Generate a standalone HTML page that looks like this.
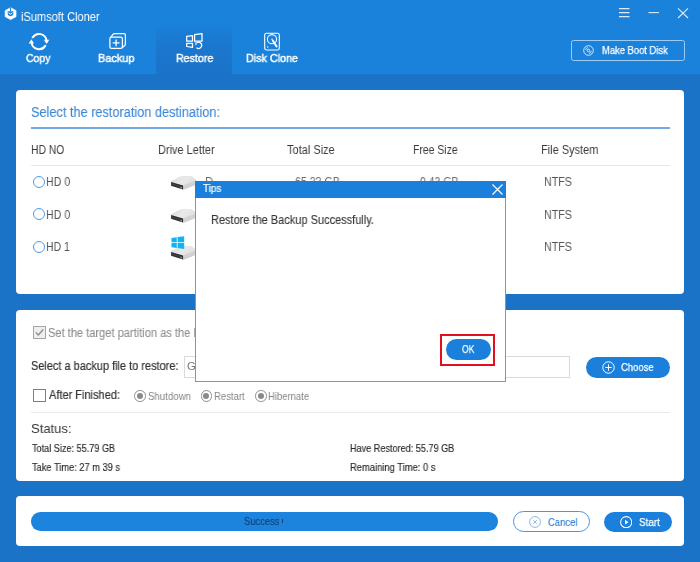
<!DOCTYPE html>
<html><head><meta charset="utf-8">
<style>
*{box-sizing:border-box;margin:0;padding:0}
html,body{width:700px;height:562px;overflow:hidden}
body{background:#1a73c6;font-family:"Liberation Sans",sans-serif;position:relative;color:#333}
.abs{position:absolute}
#hdr{left:0;top:0;width:700px;height:74px;background:#1a82db}
#seltab{left:156px;top:24px;width:76px;height:50px;background:linear-gradient(to bottom,rgba(27,116,202,0) 0,rgba(27,116,202,.55) 25%,rgba(27,116,202,.9) 60%,#1b74ca 100%)}
.t{position:absolute;white-space:nowrap;line-height:1;transform-origin:0 0;will-change:transform}
.panel{position:absolute;left:15.5px;width:668.5px;background:#fff;border-radius:4px}
.radio{position:absolute;width:12px;height:12px;border:1.1px solid #4d9ce6;border-radius:50%;background:#fff}
.gr{position:absolute;width:11.5px;height:11.5px;border:1.2px solid #8f8f8f;border-radius:50%;background:#fff}
.gr:after{content:"";position:absolute;left:1.6px;top:1.6px;width:6px;height:6px;border-radius:50%;background:#8a8a8a}
</style></head><body>
<div id="hdr" class="abs"></div>
<div id="seltab" class="abs"></div>

<!-- logo -->
<svg class="abs" style="left:4px;top:7px" width="13" height="13.500" viewBox="0 0 13 13.500"><path d="M6.600 0.700 L12 3.600 V9.700 L6.600 12.600 L1.200 9.700 V3.600 Z" fill="#fff" stroke="#fff" stroke-width="0.700" stroke-linejoin="round"/><path d="M6.500 0.500 V4.300" stroke="#1a82db" stroke-width="1"/><path d="M3.700 4.200 H9.300 V7 Q9.300 8 8.300 8.500 L6.500 9.300 L4.700 8.500 Q3.700 8 3.700 7 Z" fill="#1a82db"/><path d="M4.600 5.800 L6.500 7.100 L8.400 5.800" stroke="#fff" stroke-width="1" fill="none"/></svg>

<!-- tab icons -->
<svg class="abs" style="left:28px;top:32px" width="22" height="20" viewBox="0 0 22 20" fill="none" stroke="#fff" stroke-width="1.900" stroke-linecap="round">
<path d="M4.70 5.35 A7.6 7.6 0 0 1 18.53 8.54"/><path d="M17.30 13.85 A7.6 7.6 0 0 1 3.47 10.66"/>
<path d="M15.90 7.80 H21.30 L18.60 11.90 Z" fill="#fff" stroke="none"/><path d="M0.70 11.40 H6.10 L3.40 7.30 Z" fill="#fff" stroke="none"/>
</svg>
<svg class="abs" style="left:107.500px;top:32px" width="20" height="18" viewBox="0 0 20 18" fill="none" stroke="#fff" stroke-width="1.250" stroke-linejoin="round">
<rect x="1.900" y="5.100" width="12.500" height="11.300" rx="1.600"/><path d="M2.600 5.400 L5 2.300 Q5.600 1.600 6.500 1.600 H15.900 Q17.400 1.600 17.400 3.100 V12.100 Q17.400 13 16.800 13.500 L14 15.900"/>
<path d="M8.100 7.400 V14.200 M4.700 10.800 H11.500" stroke-width="1.300"/>
</svg>
<svg class="abs" style="left:185px;top:33px" width="19" height="17" viewBox="0 0 19 17" fill="none" stroke="#fff" stroke-width="1.250" stroke-linejoin="round">
<path d="M1.700 3.300 L7.500 2.600 V8.200 H1.700 Z"/><path d="M9.600 1.600 L17 0.700 V8.200 H9.600 Z"/><path d="M1.700 10.300 H7.500 V14.400 L1.700 13.500 Z"/>
<path d="M11.500 10 A3.100 3.100 0 1 1 11.400 14.600" stroke-width="1.200"/><path d="M9.800 9.700 L11.300 10.600 L10.700 12.200" stroke-width="1"/>
</svg>
<svg class="abs" style="left:263px;top:31.500px" width="18" height="19" viewBox="0 0 18 19" fill="none" stroke="#fff" stroke-width="1.100">
<rect x="1.700" y="1.200" width="14.600" height="16.800" rx="1.800"/><circle cx="9" cy="7.200" r="4.600"/><circle cx="9" cy="7.200" r="0.700" fill="#fff" stroke="none"/><path d="M9.800 8.500 L13.600 14.600" stroke-width="1.900" stroke-linecap="round"/><circle cx="4.700" cy="15" r="0.700" fill="#fff" stroke="none"/>
</svg>

<!-- window controls -->
<svg class="abs" style="left:618px;top:6px" width="72" height="14" viewBox="0 0 72 14" stroke="#dcebfa" stroke-width="1.100" fill="none">
<path d="M1 2.600 H11.500 M1 6.600 H11.500 M1 10.600 H11.500"/><path d="M30.500 6.600 H41"/><path d="M60 2.400 L70 12 M70 2.400 L60 12"/>
</svg>
<!-- Make boot disk -->
<div class="abs" style="left:571px;top:40px;width:114px;height:21px;border:1px solid #9ccbf4;border-radius:2.500px"></div>
<svg class="abs" style="left:583px;top:45.300px" width="11" height="11" viewBox="0 0 11 11" fill="none" stroke="#e9f3fd" stroke-width="0.900"><circle cx="5.500" cy="5.500" r="4.800"/><circle cx="5.500" cy="5.500" r="1.300"/><path d="M2.600 4.800 A3 3 0 0 1 4.800 2.600"/><path d="M8.400 6.200 A3 3 0 0 1 6.200 8.400"/></svg>

<!-- panel 1 -->
<div class="panel" style="top:89.500px;height:204.500px"></div>
<div class="abs" style="left:31px;top:127.300px;width:638.500px;height:1.400px;background:#74aae4"></div>
<div class="abs" style="left:31px;top:165px;width:638.500px;height:1px;background:#e7e7e7"></div>

<div class="radio" style="left:33px;top:175.800px"></div>
<div class="radio" style="left:33px;top:208.100px"></div>
<div class="radio" style="left:33px;top:240.800px"></div>

<!-- drive icons -->
<svg class="abs" style="left:170px;top:175px" width="30" height="16" viewBox="0 0 30 16"><use href="#drv"/></svg>
<svg class="abs" style="left:170px;top:207.500px" width="30" height="16" viewBox="0 0 30 16"><use href="#drv"/></svg>
<svg class="abs" style="left:170px;top:245px" width="30" height="16" viewBox="0 0 30 16"><use href="#drv"/></svg>
<svg class="abs" style="left:170.500px;top:235.500px" width="14" height="13" viewBox="0 0 14 13"><path d="M0.500 2 L5.800 1.200 V6.200 H0.500 Z M6.600 1.100 L13.200 0.200 V6.200 H6.600 Z M0.500 7 H5.800 V12 L0.500 11.200 Z M6.600 7 H13.200 V13 L6.600 12.100 Z" fill="#12b4f0"/></svg>
<svg width="0" height="0" style="position:absolute"><defs>
<linearGradient id="dg" x1="0" y1="0" x2="1" y2="0.6"><stop offset="0" stop-color="#d9d9d9"/><stop offset="0.5" stop-color="#e9e9e9"/><stop offset="1" stop-color="#dcdcdc"/></linearGradient>
<g id="drv"><path d="M0.800 6.300 L10.300 1.500 Q11.500 0.900 12.800 0.900 L20.800 1.100 Q22 1.150 22.800 1.900 L26.600 5.300 V9.600 L14.300 14.600 Q13.500 14.900 12.700 14.600 L0.800 10.900 Z" fill="url(#dg)"/><path d="M13.600 10.300 L26.600 5.300 V9.600 L14.300 14.600 Q13.900 14.750 13.600 14.750 Z" fill="#d2d2d2"/><path d="M1.100 6.900 L13.100 10.500 V14.500 L1.100 10.700 Z" fill="#2e2e2e"/><path d="M2.200 8.600 L12 11.600 V12.800 L2.200 9.800 Z" fill="#484848"/><path d="M10.600 12 L11.900 12.400 V13.500 L10.600 13.100 Z" fill="#b6e6b0"/></g>
</defs></svg>

<!-- panel 2 -->
<div class="panel" style="top:310px;height:170.500px"></div>
<div class="abs" style="left:33px;top:326.300px;width:13.300px;height:13px;border:1.200px solid #a6a6a6;background:#efefef"></div>
<svg class="abs" style="left:34px;top:327.300px" width="11" height="11" viewBox="0 0 11 11" fill="none" stroke="#8a8a8a" stroke-width="1.300"><path d="M1.800 5.400 L4.300 8 L9.300 2.500"/></svg>
<div class="abs" style="left:183.500px;top:356px;width:386.500px;height:21.500px;border:1px solid #dadada;background:#fff"></div>
<div class="abs" style="left:585.500px;top:356.500px;width:84px;height:21px;border-radius:10.500px;background:#1b80db"></div>
<svg class="abs" style="left:601.500px;top:360.500px" width="13" height="13" viewBox="0 0 13 13" fill="none" stroke="#fff" stroke-width="1"><circle cx="6.500" cy="6.500" r="5.700"/><path d="M6.500 3.300 V9.700 M3.300 6.500 H9.700"/></svg>

<div class="abs" style="left:33px;top:388.700px;width:13.300px;height:13px;border:1.300px solid #3b8fe0;background:#fff"></div>
<div class="gr" style="left:134.300px;top:390.300px"></div>
<div class="gr" style="left:200.600px;top:390.300px"></div>
<div class="gr" style="left:255.200px;top:390.300px"></div>
<div class="abs" style="left:31px;top:412.300px;width:638.500px;height:1px;background:#e9e9e9"></div>

<!-- panel 3 -->
<div class="panel" style="top:496.200px;height:50px"></div>
<div class="abs" style="left:31px;top:512.200px;width:467px;height:18.600px;border-radius:9.300px;background:#1d84de"></div>
<div class="abs" style="left:282.200px;top:518.600px;width:1.200px;height:4.200px;background:#143e6e"></div>
<div class="abs" style="left:512.500px;top:511.300px;width:77px;height:21px;border-radius:10.500px;border:1px solid #4a95e0;background:#fff"></div>
<svg class="abs" style="left:529px;top:516px" width="12" height="12" viewBox="0 0 12 12" fill="none" stroke="#7fb0e4" stroke-width="0.900"><circle cx="6" cy="6" r="5.400"/><path d="M4.200 4.200 L7.800 7.800 M7.800 4.200 L4.200 7.800"/></svg>
<div class="abs" style="left:603.700px;top:511.500px;width:68px;height:20.800px;border-radius:10.400px;background:#1b80db"></div>
<svg class="abs" style="left:619.800px;top:515.800px" width="12.400" height="12.400" viewBox="0 0 12 12" fill="none" stroke="#fff" stroke-width="1"><circle cx="6" cy="6" r="5.400"/><path d="M4.900 3.700 L8.300 6 L4.900 8.300 Z" fill="#fff" stroke="none"/></svg>

<div class="t" style="left:21.15px;top:11px;font-size:12.7px;color:#fff;transform:scaleX(0.8706)">iSumsoft Cloner</div>
<div class="t" style="left:26.35px;top:52px;font-size:11.6px;color:#fff;transform:scaleX(0.9047);-webkit-text-stroke:0.45px #fff">Copy</div>
<div class="t" style="left:98.29px;top:52px;font-size:11.6px;color:#fff;transform:scaleX(0.9404);-webkit-text-stroke:0.45px #fff">Backup</div>
<div class="t" style="left:175.81px;top:52px;font-size:11.6px;color:#fff;transform:scaleX(0.9190);-webkit-text-stroke:0.45px #fff">Restore</div>
<div class="t" style="left:246.30px;top:52px;font-size:11.6px;color:#fff;transform:scaleX(0.9273);-webkit-text-stroke:0.45px #fff">Disk Clone</div>
<div class="t" style="left:602.34px;top:45px;font-size:10.7px;color:#fff;transform:scaleX(0.8795);-webkit-text-stroke:0.25px #fff">Make Boot Disk</div>
<div class="t" style="left:31.15px;top:105px;font-size:14px;color:#3a86d6;transform:scaleX(0.9097);-webkit-text-stroke:0.1px #3a86d6">Select the restoration destination:</div>
<div class="t" style="left:30.94px;top:144px;font-size:12px;color:#3a3a3a;transform:scaleX(0.8595)">HD NO</div>
<div class="t" style="left:158.09px;top:144px;font-size:12px;color:#3a3a3a;transform:scaleX(0.9136)">Drive Letter</div>
<div class="t" style="left:286.52px;top:144px;font-size:12px;color:#3a3a3a;transform:scaleX(0.9171)">Total Size</div>
<div class="t" style="left:413.38px;top:144px;font-size:12px;color:#3a3a3a;transform:scaleX(0.8693)">Free Size</div>
<div class="t" style="left:540.84px;top:144px;font-size:12px;color:#3a3a3a;transform:scaleX(0.9139)">File System</div>
<div class="t" style="left:46.32px;top:176px;font-size:12px;color:#555;transform:scaleX(0.8846)">HD 0</div>
<div class="t" style="left:46.32px;top:209px;font-size:12px;color:#555;transform:scaleX(0.8846)">HD 0</div>
<div class="t" style="left:46.33px;top:241px;font-size:12px;color:#555;transform:scaleX(0.8660)">HD 1</div>
<div class="t" style="left:543.61px;top:176px;font-size:12px;color:#555;transform:scaleX(0.8908)">NTFS</div>
<div class="t" style="left:543.61px;top:209px;font-size:12px;color:#555;transform:scaleX(0.8908)">NTFS</div>
<div class="t" style="left:543.61px;top:241px;font-size:12px;color:#555;transform:scaleX(0.8908)">NTFS</div>
<div class="t" style="left:205.06px;top:176px;font-size:12px;color:#6a6a6a;transform:scaleX(0.9429)">D</div>
<div class="t" style="left:295.06px;top:176px;font-size:12px;color:#6a6a6a;transform:scaleX(0.8838)">65.33 GB</div>
<div class="t" style="left:419.56px;top:176px;font-size:12px;color:#6a6a6a;transform:scaleX(0.8721)">9.43 GB</div>
<div class="t" style="left:48.34px;top:327px;font-size:12px;color:#8e8e8e;transform:scaleX(0.9233);-webkit-text-stroke:0.1px #8e8e8e">Set the target partition as the boot partition</div>
<div class="t" style="left:31.35px;top:360px;font-size:12.3px;color:#333;transform:scaleX(0.8915);-webkit-text-stroke:0.2px #333">Select a backup file to restore:</div>
<div class="t" style="left:186.93px;top:362px;font-size:10px;color:#777;transform:scaleX(1.1373)">G:\</div>
<div class="t" style="left:621.38px;top:362px;font-size:11.2px;color:#fff;transform:scaleX(0.8477);-webkit-text-stroke:0.25px #fff">Choose</div>
<div class="t" style="left:48.80px;top:389px;font-size:12.2px;color:#333;transform:scaleX(0.9026);-webkit-text-stroke:0.2px #333">After Finished:</div>
<div class="t" style="left:147.53px;top:392px;font-size:10.3px;color:#858585;transform:scaleX(0.9385)">Shutdown</div>
<div class="t" style="left:213.81px;top:392px;font-size:10.3px;color:#858585;transform:scaleX(0.9225)">Restart</div>
<div class="t" style="left:268.06px;top:392px;font-size:10.3px;color:#858585;transform:scaleX(0.9195)">Hibernate</div>
<div class="t" style="left:31.07px;top:422px;font-size:13.4px;color:#333;transform:scaleX(0.9736)">Status:</div>
<div class="t" style="left:31.78px;top:444px;font-size:10.2px;color:#2a2a2a;transform:scaleX(0.8943);-webkit-text-stroke:0.15px #2a2a2a">Total Size: 55.79 GB</div>
<div class="t" style="left:31.77px;top:463px;font-size:10.2px;color:#2a2a2a;transform:scaleX(0.9091);-webkit-text-stroke:0.15px #2a2a2a">Take Time: 27 m 39 s</div>
<div class="t" style="left:349.83px;top:444px;font-size:10.2px;color:#2a2a2a;transform:scaleX(0.8939);-webkit-text-stroke:0.15px #2a2a2a">Have Restored: 55.79 GB</div>
<div class="t" style="left:349.81px;top:463px;font-size:10.2px;color:#2a2a2a;transform:scaleX(0.9210);-webkit-text-stroke:0.15px #2a2a2a">Remaining Time: 0 s</div>
<div class="t" style="left:243.96px;top:516px;font-size:10.7px;color:#143e6e;transform:scaleX(0.8759);-webkit-text-stroke:0.1px #143e6e">Success</div>
<div class="t" style="left:548.37px;top:517px;font-size:10.9px;color:#2a7fd6;transform:scaleX(0.8672);-webkit-text-stroke:0.15px #2a7fd6">Cancel</div>
<div class="t" style="left:639.04px;top:517px;font-size:10.9px;color:#fff;transform:scaleX(0.9111);-webkit-text-stroke:0.25px #fff">Start</div>
<!-- dialog -->
<div class="abs" style="left:195px;top:180.700px;width:311px;height:201.600px;background:#fff;border:1px solid #5f9fdc"></div>
<div class="abs" style="left:195px;top:180.700px;width:311px;height:17.500px;background:#1b80db"></div>
<svg class="abs" style="left:492px;top:184px" width="11" height="11" viewBox="0 0 11 11" stroke="#fff" stroke-width="1.200" fill="none"><path d="M0.500 0.500 L10.500 10.500 M10.500 0.500 L0.500 10.500"/></svg>
<div class="abs" style="left:440px;top:333.800px;width:54.500px;height:32px;border:2.300px solid #e2101f"></div>
<div class="abs" style="left:445.500px;top:338.800px;width:45.300px;height:21.700px;border-radius:10.900px;background:#1b80db"></div>
<div class="t" style="left:203.26px;top:184px;font-size:10.2px;color:#fff;transform:scaleX(0.9699);-webkit-text-stroke:0.2px #fff">Tips</div>
<div class="t" style="left:210.58px;top:214px;font-size:12px;color:#333;transform:scaleX(0.9161);-webkit-text-stroke:0.1px #333">Restore the Backup Successfully.</div>
<div class="t" style="left:461.62px;top:344px;font-size:11.3px;color:#fff;transform:scaleX(0.7619);-webkit-text-stroke:0.25px #fff">OK</div>
</body></html>
